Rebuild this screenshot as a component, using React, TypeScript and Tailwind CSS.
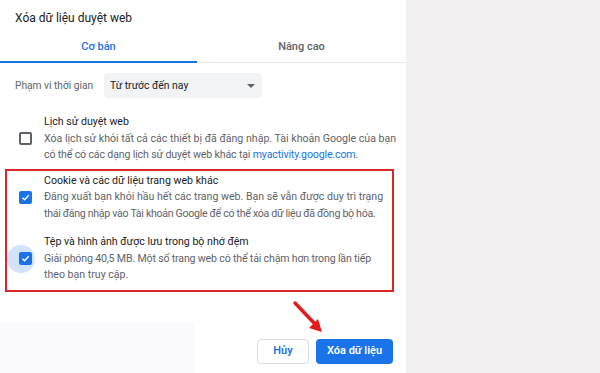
import React from "react";

function Checkbox({ checked }: { checked: boolean }) {
  if (!checked) {
    return (
      <span className="block h-[13px] w-[13px] rounded-[2px] border-2 border-[#5f6368] bg-white" />
    );
  }
  return (
    <span className="flex h-[13px] w-[13px] items-center justify-center rounded-[2px] bg-[#1a73e8]">
      <svg width="9" height="9" viewBox="0 0 10 10">
        <path d="M1.6 5.2 L4 7.4 L8.6 2.6" fill="none" stroke="#fff" strokeWidth="1.6" />
      </svg>
    </span>
  );
}

function Option({
  title,
  checked,
  halo,
  children,
}: {
  title: string;
  checked: boolean;
  halo?: boolean;
  children: React.ReactNode;
}) {
  return (
    <div className="flex items-center">
      <div className="relative flex w-[37px] shrink-0 items-center justify-center">
        {halo && (
          <span className="absolute left-[0px] top-1/2 h-[28px] w-[28px] -translate-y-1/2 rounded-full bg-[#d2e3fc]" />
        )}
        <span className="relative">
          <Checkbox checked={checked} />
        </span>
      </div>
      <div className="whitespace-nowrap text-[10.6px] leading-[16.5px]">
        <div className="text-[#202124]">{title}</div>
        <div className="text-[#5f6368]">{children}</div>
      </div>
    </div>
  );
}

export default function App() {
  return (
    <div
      className="flex h-[373px] w-[600px] overflow-hidden bg-white"
      style={{ fontFamily: "Roboto, 'Noto Sans', sans-serif" }}
    >
      <div className="relative w-[406px] shrink-0 bg-white">
        {/* title */}
        <div className="h-[34px] pl-[15px] pt-[10px] text-[12px] leading-[16px] text-[#202124]">
          Xóa dữ liệu duyệt web
        </div>

        {/* tabs */}
        <div className="flex h-[27px] items-center text-[11px] font-medium">
          <div className="w-[197px] text-center text-[#1a73e8]">Cơ bản</div>
          <div className="flex-1 text-center text-[#5f6368]">Nâng cao</div>
        </div>
        <div className="flex h-[2px]">
          <div className="w-[197px] bg-[#1a73e8]" />
          <div className="flex-1 border-b border-[#e8e8e8]" />
        </div>

        {/* time range */}
        <div className="mt-[10px] flex h-[25px] items-center pl-[15px]">
          <span className="w-[89px] text-[10.2px] text-[#5f6368]">Phạm vi thời gian</span>
          <div className="flex h-[25px] w-[158px] items-center justify-between rounded-[4px] bg-[#f1f3f4] pl-[6px] pr-[6px] text-[10.4px] text-[#202124]">
            <span>Từ trước đến nay</span>
            <svg width="10" height="6" viewBox="0 0 10 6">
              <path d="M1 1 L9 1 L5 5 Z" fill="#5f6368" />
            </svg>
          </div>
        </div>

        {/* browsing history */}
        <div className="mt-[16px] pl-[7px]">
          <Option title="Lịch sử duyệt web" checked={false}>
            Xóa lịch sử khỏi tất cả các thiết bị đã đăng nhập. Tài khoản Google của bạn
            <br />
            <span className="tracking-[-0.15px]">
              có thể có các dạng lịch sử duyệt web khác tại{" "}
              <span className="text-[#1a73e8]">myactivity.google.com</span>.
            </span>
          </Option>
        </div>

        {/* highlighted group */}
        <div className="ml-[5px] mt-[5px] flex w-[389px] flex-col gap-[12px] border-2 border-[#d9262b] pb-[6px] pt-[2px]">
          <Option title="Cookie và các dữ liệu trang web khác" checked>
            Đăng xuất bạn khỏi hầu hết các trang web. Bạn sẽ vẫn được duy trì trạng
            <br />
            <span className="tracking-[-0.3px]">
              thái đăng nhập vào Tài khoản Google để có thể xóa dữ liệu đã đồng bộ hóa.
            </span>
          </Option>
          <Option title="Tệp và hình ảnh được lưu trong bộ nhớ đệm" checked halo>
            <span className="tracking-[-0.17px]">
              Giải phóng 40,5 MB. Một số trang web có thể tải chậm hơn trong lần tiếp
            </span>
            <br />
            theo bạn truy cập.
          </Option>
        </div>

        {/* footer */}
        <div className="mt-[30px] flex h-[60px]">
          <div className="w-[195px] bg-[#fbfbfd]" />
          <div className="flex flex-1 items-start justify-end gap-[7px] pr-[13px] pt-[17px]">
            <button className="h-[25px] w-[52px] rounded-[4px] border border-[#dadce0] bg-white text-[11px] font-semibold text-[#1a73e8]">
              Hủy
            </button>
            <button className="h-[25px] w-[77px] rounded-[4px] bg-[#1a73e8] text-[11px] font-semibold text-white">
              Xóa dữ liệu
            </button>
          </div>
        </div>

        {/* red arrow annotation */}
        <svg
          className="absolute left-[288px] top-[296px]"
          width="40"
          height="40"
          viewBox="0 0 40 40"
        >
          <path d="M7 7 L27 28" stroke="#e31b1b" strokeWidth="3.5" strokeLinecap="round" />
          <path d="M34 36 L21 32 L30 23 Z" fill="#e31b1b" />
        </svg>
      </div>
      <div className="flex-1 bg-[#f2f0f1]" />
    </div>
  );
}
